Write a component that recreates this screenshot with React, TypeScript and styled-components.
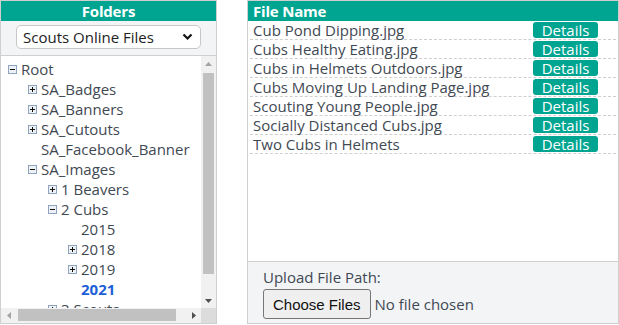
import React from "react";
import styled, { createGlobalStyle } from "styled-components";

const TEAL = "#00a591";
const TEXT = "#3f4953";
const FONT = `"Open Sans", "Lato", sans-serif`;

const Global = createGlobalStyle`
  html, body { margin: 0; padding: 0; background: #fff; }
  body { font-family: ${FONT}; color: ${TEXT}; }
  * { box-sizing: border-box; }
`;

const Page = styled.div`
  display: flex;
  gap: 30px;
  align-items: flex-start;
`;

const FolderPanel = styled.section`
  width: 217px;
  height: 324px;
  border: 1px solid #cfcfcf;
  display: flex;
  flex-direction: column;
  background: #fff;
`;

const PanelHeader = styled.div<{ $align?: string }>`
  height: 20px;
  flex: none;
  background: ${TEAL};
  color: #fff;
  font-weight: 700;
  font-size: 15px;
  line-height: 20px;
  text-align: ${(p) => p.$align || "center"};
  padding: 0 5px;
  letter-spacing: -0.2px;
`;

const SelectBar = styled.div`
  flex: none;
  height: 35px;
  background: #f3f4f6;
  border-bottom: 1px solid #cfcfcf;
  padding: 4px 15px 0 15px;
`;

const SelectWrap = styled.div`
  position: relative;
  width: 185px;
  height: 24px;
`;

const Select = styled.select`
  appearance: none;
  width: 100%;
  height: 100%;
  border: 1px solid #c7c7c7;
  border-radius: 5px;
  background: #fff;
  font-family: ${FONT};
  font-size: 15px;
  color: #222;
  padding: 0 0 0 6px;
  outline: none;
`;

const Chevron = styled.svg`
  position: absolute;
  right: 8px;
  top: 8px;
  pointer-events: none;
`;

const TreeFrame = styled.div`
  flex: 1;
  min-height: 0;
  display: grid;
  grid-template-columns: 1fr 15px;
  grid-template-rows: 1fr 15px;
`;

const TreeView = styled.div`
  overflow: hidden;
  background: #fff;
`;

const TreeInner = styled.div`
  width: 214px;
  padding: 3px 0 17px 0;
`;

const ScrollBar = styled.div<{ $dir: "v" | "h" }>`
  display: flex;
  flex-direction: ${(p) => (p.$dir === "v" ? "column" : "row")};
  background: #f1f1f1;
`;

const ScrollButton = styled.div`
  width: 15px;
  height: 15px;
  flex: none;
  display: flex;
  align-items: center;
  justify-content: center;
`;

const ScrollTrack = styled.div<{ $dir: "v" | "h" }>`
  flex: 1;
  display: flex;
  flex-direction: ${(p) => (p.$dir === "v" ? "column" : "row")};
  padding: ${(p) => (p.$dir === "v" ? "2px 2px" : "1px 2px 2px 2px")};
`;

const ScrollThumb = styled.div<{ $dir: "v" | "h"; $size: number }>`
  background: #c1c1c1;
  flex: none;
  ${(p) => (p.$dir === "v" ? `height: ${p.$size}px;` : `width: ${p.$size}px;`)}
  ${(p) => (p.$dir === "v" ? "width: 100%;" : "height: 100%;")}
`;

const ScrollCorner = styled.div`
  background: #dcdcdc;
`;

const Node = styled.div<{ $depth: number }>`
  height: 20px;
  display: flex;
  align-items: center;
  padding-left: ${(p) => 7 + p.$depth * 20}px;
  white-space: nowrap;
`;

const Toggle = styled.span`
  width: 9px;
  height: 9px;
  flex: none;
  margin-right: 4px;
  display: inline-flex;
  margin-top: 1px;
`;

const Label = styled.span<{ $selected?: boolean }>`
  font-size: 15px;
  line-height: 20px;
  color: ${(p) => (p.$selected ? "#1f5fd6" : TEXT)};
  font-weight: ${(p) => (p.$selected ? 700 : 400)};
`;

const FilePanel = styled.section`
  width: 372px;
  height: 324px;
  border: 1px solid #cfcfcf;
  display: flex;
  flex-direction: column;
  background: #fff;
`;

const FileList = styled.div`
  flex: 1;
  padding: 0 2px;
`;

const FileRow = styled.div`
  height: 19px;
  display: flex;
  align-items: center;
  justify-content: space-between;
  border-bottom: 1px dashed #cfcfcf;
  padding: 0 18px 0 3px;
`;

const FileName = styled.span`
  font-size: 15px;
  line-height: 18px;
  color: ${TEXT};
`;

const DetailsButton = styled.button`
  width: 65px;
  height: 16px;
  border: none;
  border-radius: 3px;
  background: ${TEAL};
  color: #fff;
  font-family: ${FONT};
  font-size: 15px;
  line-height: 16px;
  padding: 0;
`;

const Footer = styled.div`
  flex: none;
  height: 62px;
  background: #f3f4f6;
  border-top: 1px solid #cfcfcf;
  padding: 6px 15px 0 15px;
  display: flex;
  flex-direction: column;
  gap: 3px;
`;

const FooterLabel = styled.div`
  font-size: 15px;
  line-height: 18px;
  color: ${TEXT};
`;

const FileInput = styled.input`
  font-family: ${FONT};
  font-size: 15px;
  color: ${TEXT};
  &::file-selector-button {
    font-family: "Liberation Sans", Arial, sans-serif;
    font-size: 15px;
    color: #111;
    height: 30px;
    padding: 0 9px;
    margin-right: 4px;
    border: 1px solid #767676;
    border-radius: 3px;
    background: #efefef;
  }
`;

function ToggleIcon({ open }: { open: boolean }) {
  return (
    <Toggle>
      <svg width="9" height="9" viewBox="0 0 9 9">
        <rect x="0.5" y="0.5" width="8" height="8" fill="#eef1f5" stroke="#8ea3be" />
        <rect x="2" y="4" width="5" height="1" fill="#111" />
        {!open && <rect x="4" y="2" width="1" height="5" fill="#111" />}
      </svg>
    </Toggle>
  );
}

function Arrow({ dir, color }: { dir: "up" | "down" | "left" | "right"; color: string }) {
  const pts = {
    up: "0,4 7,4 3.5,0",
    down: "0,0 7,0 3.5,4",
    left: "4,0 4,7 0,3.5",
    right: "0,0 0,7 4,3.5",
  }[dir];
  const vert = dir === "up" || dir === "down";
  return (
    <svg width={vert ? 7 : 4} height={vert ? 4 : 7} viewBox={vert ? "0 0 7 4" : "0 0 4 7"}>
      <polygon points={pts} fill={color} />
    </svg>
  );
}

type T = { label: string; depth: number; toggle?: "open" | "closed"; selected?: boolean };

const tree: T[] = [
  { label: "Root", depth: 0, toggle: "open" },
  { label: "SA_Badges", depth: 1, toggle: "closed" },
  { label: "SA_Banners", depth: 1, toggle: "closed" },
  { label: "SA_Cutouts", depth: 1, toggle: "closed" },
  { label: "SA_Facebook_Banner", depth: 1 },
  { label: "SA_Images", depth: 1, toggle: "open" },
  { label: "1 Beavers", depth: 2, toggle: "closed" },
  { label: "2 Cubs", depth: 2, toggle: "open" },
  { label: "2015", depth: 3 },
  { label: "2018", depth: 3, toggle: "closed" },
  { label: "2019", depth: 3, toggle: "closed" },
  { label: "2021", depth: 3, selected: true },
  { label: "3 Scouts", depth: 2, toggle: "closed" },
];

const files = [
  "Cub Pond Dipping.jpg",
  "Cubs Healthy Eating.jpg",
  "Cubs in Helmets Outdoors.jpg",
  "Cubs Moving Up Landing Page.jpg",
  "Scouting Young People.jpg",
  "Socially Distanced Cubs.jpg",
  "Two Cubs in Helmets",
];

export default function App() {
  return (
    <>
      <Global />
      <Page>
        <FolderPanel>
          <PanelHeader>Folders</PanelHeader>
          <SelectBar>
            <SelectWrap>
              <Select defaultValue="scouts">
                <option value="scouts">Scouts Online Files</option>
              </Select>
              <Chevron width="11" height="8" viewBox="0 0 11 8">
                <path d="M1.5 1.5 L5.5 5.5 L9.5 1.5" fill="none" stroke="#111" strokeWidth="2.2" />
              </Chevron>
            </SelectWrap>
          </SelectBar>
          <TreeFrame>
            <TreeView>
              <TreeInner>
                {tree.map((n, i) => (
                  <Node key={i} $depth={n.depth}>
                    {n.toggle ? <ToggleIcon open={n.toggle === "open"} /> : <Toggle />}
                    <Label $selected={n.selected}>{n.label}</Label>
                  </Node>
                ))}
              </TreeInner>
            </TreeView>
            <ScrollBar $dir="v">
              <ScrollButton>
                <Arrow dir="up" color="#a3a3a3" />
              </ScrollButton>
              <ScrollTrack $dir="v">
                <ScrollThumb $dir="v" $size={201} />
              </ScrollTrack>
              <ScrollButton>
                <Arrow dir="down" color="#505050" />
              </ScrollButton>
            </ScrollBar>
            <ScrollBar $dir="h">
              <ScrollButton>
                <Arrow dir="left" color="#a3a3a3" />
              </ScrollButton>
              <ScrollTrack $dir="h">
                <ScrollThumb $dir="h" $size={158} />
              </ScrollTrack>
              <ScrollButton>
                <Arrow dir="right" color="#505050" />
              </ScrollButton>
            </ScrollBar>
            <ScrollCorner />
          </TreeFrame>
        </FolderPanel>
        <FilePanel>
          <PanelHeader $align="left">File Name</PanelHeader>
          <FileList>
            {files.map((f) => (
              <FileRow key={f}>
                <FileName>{f}</FileName>
                <DetailsButton>Details</DetailsButton>
              </FileRow>
            ))}
          </FileList>
          <Footer>
            <FooterLabel>Upload File Path:</FooterLabel>
            <div>
              <FileInput type="file" multiple />
            </div>
          </Footer>
        </FilePanel>
      </Page>
    </>
  );
}
